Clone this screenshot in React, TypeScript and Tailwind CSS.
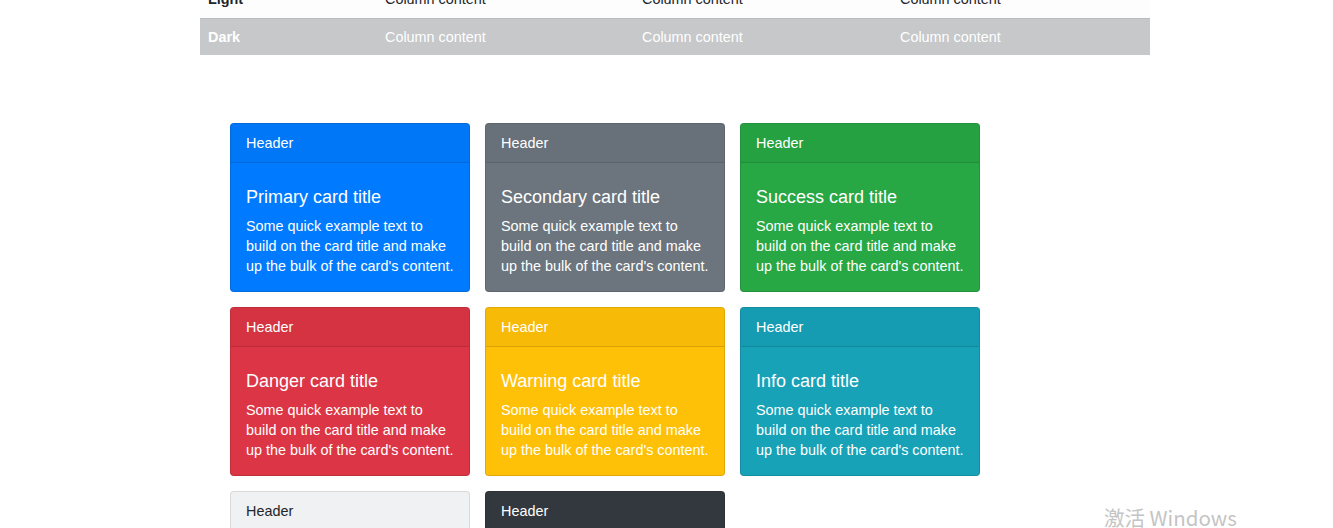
import React from 'react'

type Card = {
  name: string
  bg: string
  text: string
}

const cards: Card[] = [
  { name: 'Primary', bg: 'bg-[#007bff]', text: 'text-white' },
  { name: 'Secondary', bg: 'bg-[#6c757d]', text: 'text-white' },
  { name: 'Success', bg: 'bg-[#28a745]', text: 'text-white' },
  { name: 'Danger', bg: 'bg-[#dc3545]', text: 'text-white' },
  { name: 'Warning', bg: 'bg-[#ffc107]', text: 'text-white' },
  { name: 'Info', bg: 'bg-[#17a2b8]', text: 'text-white' },
  { name: 'Light', bg: 'bg-[#f8f9fa]', text: 'text-[#212529]' },
  { name: 'Dark', bg: 'bg-[#343a40]', text: 'text-white' },
]

function TableRow({ label, dark }: { label: string; dark?: boolean }) {
  return (
    <div
      className={`grid grid-cols-[177px_257px_258px_258px] items-center text-[14.4px] ${
        dark ? 'h-[37px] pt-[1px] bg-[#c6c8ca] text-white border-t border-[#b9bbbe]' : 'h-9 bg-[#fdfdfe] text-[#212529]'
      }`}
    >
      <div className="px-2 font-bold">{label}</div>
      <div className="px-2">Column content</div>
      <div className="px-2">Column content</div>
      <div className="px-2">Column content</div>
    </div>
  )
}

export default function App() {
  return (
    <div className="relative w-[1333px] h-[528px] overflow-hidden bg-white font-['Liberation_Sans',Arial,sans-serif]">
      {/* bottom of the table */}
      <div className="ml-[200px] w-[950px] -mt-[18px]">
        <TableRow label="Light" />
        <TableRow label="Dark" dark />
      </div>

      {/* cards */}
      <div className="ml-[230px] mt-[68px] grid grid-cols-[240px_240px_240px] gap-[15px]">
        {cards.map((c) => (
          <div
            key={c.name}
            className={`rounded-[4px] border border-black/[.125] ${c.bg} ${c.text} overflow-hidden`}
          >
            <div className="bg-black/[.03] border-b border-black/[.125] px-[15px] pt-[9px] pb-[8px] text-[14.4px] leading-[21px]">
              Header
            </div>
            <div className="px-[15px] pt-[22px] pb-[15px]">
              <h5 className="text-[18px] leading-6 mb-[7px]">{c.name} card title</h5>
              <p className="text-[14.4px] leading-5">
                Some quick example text to build on the card title and make up the bulk of the card's content.
              </p>
            </div>
          </div>
        ))}
      </div>

      {/* activation watermark */}
      <div className="absolute left-[1104px] top-[505px] text-[20.5px] leading-6 text-[#c4c4c4] font-['Noto_Sans_CJK_SC',sans-serif]">
        激活 Windows
      </div>
    </div>
  )
}
